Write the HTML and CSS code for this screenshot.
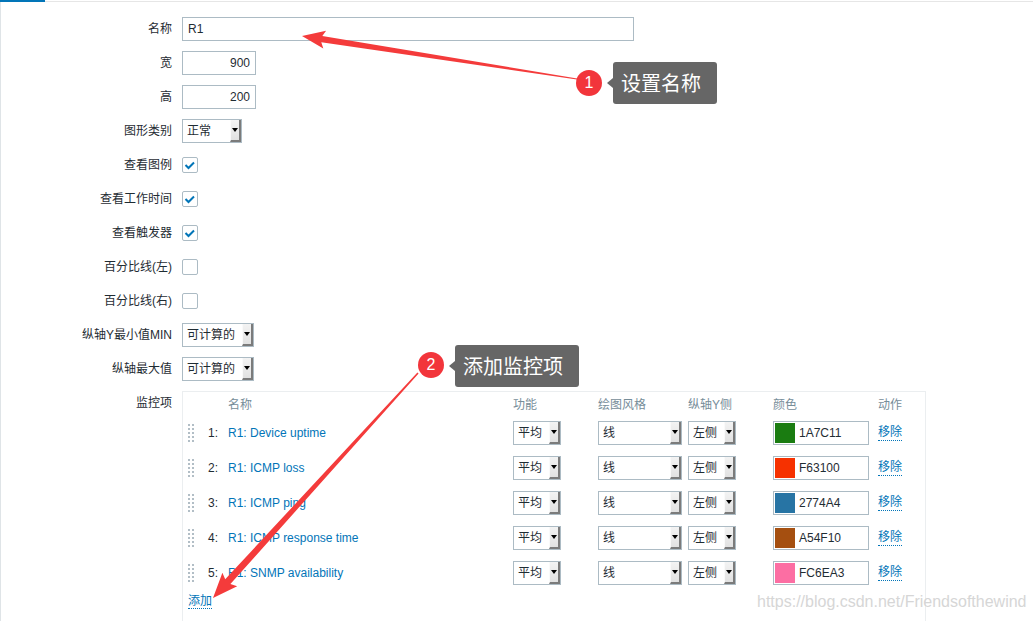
FILE: index.html
```html
<!DOCTYPE html>
<html lang="zh-CN">
<head>
    <meta charset="UTF-8">
    <title>图形 - R1</title>
    <link rel="stylesheet" href="styles.css">
</head>
<body>
    <div class="tabs">
        <div class="tab-active"></div>
        <div class="tab-line"></div>
    </div>

    <div class="page">
        <form class="form-grid">
            <label class="form-label">名称</label>
            <div class="form-field"><input class="text-input input-name" type="text" value="R1"></div>

            <label class="form-label">宽</label>
            <div class="form-field"><input class="text-input input-num" type="text" value="900"></div>

            <label class="form-label">高</label>
            <div class="form-field"><input class="text-input input-num" type="text" value="200"></div>

            <label class="form-label">图形类别</label>
            <div class="form-field">
                <span class="select w-60"><span class="select-text">正常</span><span class="select-btn"></span></span>
            </div>

            <label class="form-label">查看图例</label>
            <div class="form-field"><span class="checkbox checked"><svg viewBox="0 0 14 14"><path d="M2.5 7L5.5 10L11 4.5"/></svg></span></div>

            <label class="form-label">查看工作时间</label>
            <div class="form-field"><span class="checkbox checked"><svg viewBox="0 0 14 14"><path d="M2.5 7L5.5 10L11 4.5"/></svg></span></div>

            <label class="form-label">查看触发器</label>
            <div class="form-field"><span class="checkbox checked"><svg viewBox="0 0 14 14"><path d="M2.5 7L5.5 10L11 4.5"/></svg></span></div>

            <label class="form-label">百分比线(左)</label>
            <div class="form-field"><span class="checkbox"></span></div>

            <label class="form-label">百分比线(右)</label>
            <div class="form-field"><span class="checkbox"></span></div>

            <label class="form-label">纵轴Y最小值MIN</label>
            <div class="form-field">
                <span class="select w-72"><span class="select-text">可计算的</span><span class="select-btn"></span></span>
            </div>

            <label class="form-label">纵轴最大值</label>
            <div class="form-field">
                <span class="select w-72"><span class="select-text">可计算的</span><span class="select-btn"></span></span>
            </div>

            <label class="form-label">监控项</label>
            <div class="items-box">
                <div class="items-head">
                    <span></span><span></span>
                    <span>名称</span>
                    <span>功能</span>
                    <span>绘图风格</span>
                    <span>纵轴Y侧</span>
                    <span>颜色</span>
                    <span>动作</span>
                </div>

                <div class="item-row">
                    <span class="drag-handle"></span>
                    <span class="item-num">1:</span>
                    <a class="item-link" href="#">R1: Device uptime</a>
                    <span class="select w-48"><span class="select-text">平均</span><span class="select-btn"></span></span>
                    <span class="select w-84"><span class="select-text">线</span><span class="select-btn"></span></span>
                    <span class="select w-48"><span class="select-text">左侧</span><span class="select-btn"></span></span>
                    <span class="color-input"><span class="swatch" style="background: #1A7C11;"></span>1A7C11</span>
                    <a class="link-dotted" href="#">移除</a>
                </div>

                <div class="item-row">
                    <span class="drag-handle"></span>
                    <span class="item-num">2:</span>
                    <a class="item-link" href="#">R1: ICMP loss</a>
                    <span class="select w-48"><span class="select-text">平均</span><span class="select-btn"></span></span>
                    <span class="select w-84"><span class="select-text">线</span><span class="select-btn"></span></span>
                    <span class="select w-48"><span class="select-text">左侧</span><span class="select-btn"></span></span>
                    <span class="color-input"><span class="swatch" style="background: #F63100;"></span>F63100</span>
                    <a class="link-dotted" href="#">移除</a>
                </div>

                <div class="item-row">
                    <span class="drag-handle"></span>
                    <span class="item-num">3:</span>
                    <a class="item-link" href="#">R1: ICMP ping</a>
                    <span class="select w-48"><span class="select-text">平均</span><span class="select-btn"></span></span>
                    <span class="select w-84"><span class="select-text">线</span><span class="select-btn"></span></span>
                    <span class="select w-48"><span class="select-text">左侧</span><span class="select-btn"></span></span>
                    <span class="color-input"><span class="swatch" style="background: #2774A4;"></span>2774A4</span>
                    <a class="link-dotted" href="#">移除</a>
                </div>

                <div class="item-row">
                    <span class="drag-handle"></span>
                    <span class="item-num">4:</span>
                    <a class="item-link" href="#">R1: ICMP response time</a>
                    <span class="select w-48"><span class="select-text">平均</span><span class="select-btn"></span></span>
                    <span class="select w-84"><span class="select-text">线</span><span class="select-btn"></span></span>
                    <span class="select w-48"><span class="select-text">左侧</span><span class="select-btn"></span></span>
                    <span class="color-input"><span class="swatch" style="background: #A54F10;"></span>A54F10</span>
                    <a class="link-dotted" href="#">移除</a>
                </div>

                <div class="item-row">
                    <span class="drag-handle"></span>
                    <span class="item-num">5:</span>
                    <a class="item-link" href="#">R1: SNMP availability</a>
                    <span class="select w-48"><span class="select-text">平均</span><span class="select-btn"></span></span>
                    <span class="select w-84"><span class="select-text">线</span><span class="select-btn"></span></span>
                    <span class="select w-48"><span class="select-text">左侧</span><span class="select-btn"></span></span>
                    <span class="color-input"><span class="swatch" style="background: #FC6EA3;"></span>FC6EA3</span>
                    <a class="link-dotted" href="#">移除</a>
                </div>

                <div class="items-footer">
                    <a class="link-dotted" href="#">添加</a>
                </div>
            </div>
        </form>
    </div>

    <!-- screenshot annotations -->
    <div class="annotations">
        <svg class="arrows" width="1033" height="621" viewBox="0 0 1033 621">
            <path d="M577.1 78.5L322.3 35.9L326.1 30.7L302 36L323.3 48.5L321.3 42.3L576.9 79.5Z"/>
            <path d="M417.4 372.5L225.2 579.3L222.4 572.8L213 598L237.2 586.2L230.4 584.1L418.6 373.5Z"/>
        </svg>
        <div class="badge badge-1">1</div>
        <div class="callout callout-1">设置名称</div>
        <div class="badge badge-2">2</div>
        <div class="callout callout-2">添加监控项</div>
        <div class="watermark">https://blog.csdn.net/Friendsofthewind</div>
    </div>
</body>
</html>
```

FILE: styles.css
```css
* {
    margin: 0;
    padding: 0;
    box-sizing: border-box;
}

html, body {
    height: 100%;
}

body {
    position: relative;
    overflow: hidden;
    background: #ffffff;
    color: #1f2c33;
    font-family: "Liberation Sans", Arial, "Noto Sans CJK SC", sans-serif;
    font-size: 12px;
}

.tabs {
    display: flex;
    height: 2px;
}

.tab-active {
    width: 45px;
    background: #0275b8;
}

.tab-line {
    flex: 1;
    margin-top: 1px;
    background: #e6e6e6;
}

.page {
    min-height: calc(100% - 2px);
    border-left: 1px solid #dfe4e7;
    padding-top: 15px;
}

.form-grid {
    display: grid;
    grid-template-columns: 171px 1fr;
    gap: 10px;
}

.form-label {
    text-align: right;
    line-height: 24px;
    white-space: nowrap;
}

.form-field {
    display: flex;
    align-items: center;
    min-height: 24px;
}

.text-input {
    height: 24px;
    border: 1px solid #acbbc4;
    padding: 0 5px;
    font: inherit;
    color: #1f2c33;
    background: #ffffff;
    outline: none;
}

.input-name {
    width: 452px;
}

.input-num {
    width: 74px;
    text-align: right;
}

/* old-style select with 3d button */
.select {
    display: inline-flex;
    height: 24px;
    border: 1px solid #acbbc4;
    background: #ffffff;
}

.w-48 { width: 48px; }
.w-60 { width: 60px; }
.w-72 { width: 72px; }
.w-84 { width: 84px; }

.select-text {
    flex: 1;
    padding-left: 4px;
    line-height: 22px;
    white-space: nowrap;
    overflow: hidden;
}

.select-btn {
    width: 11px;
    display: flex;
    align-items: center;
    justify-content: center;
    background: linear-gradient(#f3f3f3, #e1e1e1);
    border-left: 1px solid #fafafa;
    border-right: 2px solid #7b7b7b;
    border-bottom: 2px solid #7b7b7b;
}

.select-btn::after {
    content: "";
    border-top: 4px solid #000000;
    border-left: 3px solid transparent;
    border-right: 3px solid transparent;
}

.checkbox {
    width: 16px;
    height: 16px;
    border: 1px solid #acbbc4;
    border-radius: 2px;
    background: #ffffff;
}

.checkbox svg {
    display: block;
    width: 14px;
    height: 14px;
    fill: none;
    stroke: #0275b8;
    stroke-width: 2;
}

/* items table */
.items-box {
    width: 744px;
    border: 1px solid #ebeef0;
    padding: 0 0 14px 5px;
}

.items-head,
.item-row {
    display: grid;
    grid-template-columns: 20px 20px 285px 85px 90px 85px 105px 1fr;
    align-items: center;
}

.items-head > *,
.item-row > * {
    justify-self: start;
}

.items-head {
    height: 23px;
    padding-top: 3px;
    line-height: 20px;
    color: #768d99;
}

.item-row {
    height: 35px;
}

.drag-handle {
    width: 6px;
    height: 18px;
    background-color: #b2bec6;
    background-image: linear-gradient(90deg, transparent 2px, #ffffff 2px),
                      linear-gradient(transparent 2px, #ffffff 2px);
    background-size: 4px 4px;
}

.item-link {
    color: #0275b8;
    text-decoration: none;
    white-space: nowrap;
}

.color-input {
    display: flex;
    align-items: center;
    width: 96px;
    height: 24px;
    border: 1px solid #acbbc4;
    padding-left: 1px;
}

.swatch {
    width: 20px;
    height: 20px;
    margin-right: 4px;
}

.link-dotted {
    color: #0275b8;
    text-decoration: none;
    line-height: 16px;
    border-bottom: 1px dotted #0275b8;
}

.items-footer {
    padding-top: 3px;
}

/* annotations drawn over the screenshot */
.annotations {
    position: absolute;
    top: 0;
    left: 0;
    width: 1033px;
    height: 621px;
    pointer-events: none;
}

.arrows {
    position: absolute;
    top: 0;
    left: 0;
    fill: #f43b3b;
}

.badge {
    position: absolute;
    width: 26px;
    height: 26px;
    border-radius: 50%;
    background: #f2353b;
    color: #ffffff;
    font-size: 16px;
    line-height: 26px;
    text-align: center;
}

.badge-1 {
    left: 576px;
    top: 70px;
}

.badge-2 {
    left: 418px;
    top: 352px;
}

.callout {
    position: absolute;
    height: 42px;
    padding: 0 16px 0 8px;
    border-radius: 3px;
    background: #666666;
    color: #ffffff;
    font-family: "Noto Sans CJK SC", sans-serif;
    font-size: 20px;
    line-height: 42px;
    white-space: nowrap;
}

.callout::before {
    content: "";
    position: absolute;
    left: -6px;
    top: 16px;
    border-right: 6px solid #666666;
    border-top: 5px solid transparent;
    border-bottom: 5px solid transparent;
}

.callout-1 {
    left: 613px;
    top: 62px;
}

.callout-2 {
    left: 455px;
    top: 345px;
}

.watermark {
    position: absolute;
    left: 757px;
    top: 593px;
    font-size: 16px;
    color: #d6d6d6;
    white-space: nowrap;
}
```
